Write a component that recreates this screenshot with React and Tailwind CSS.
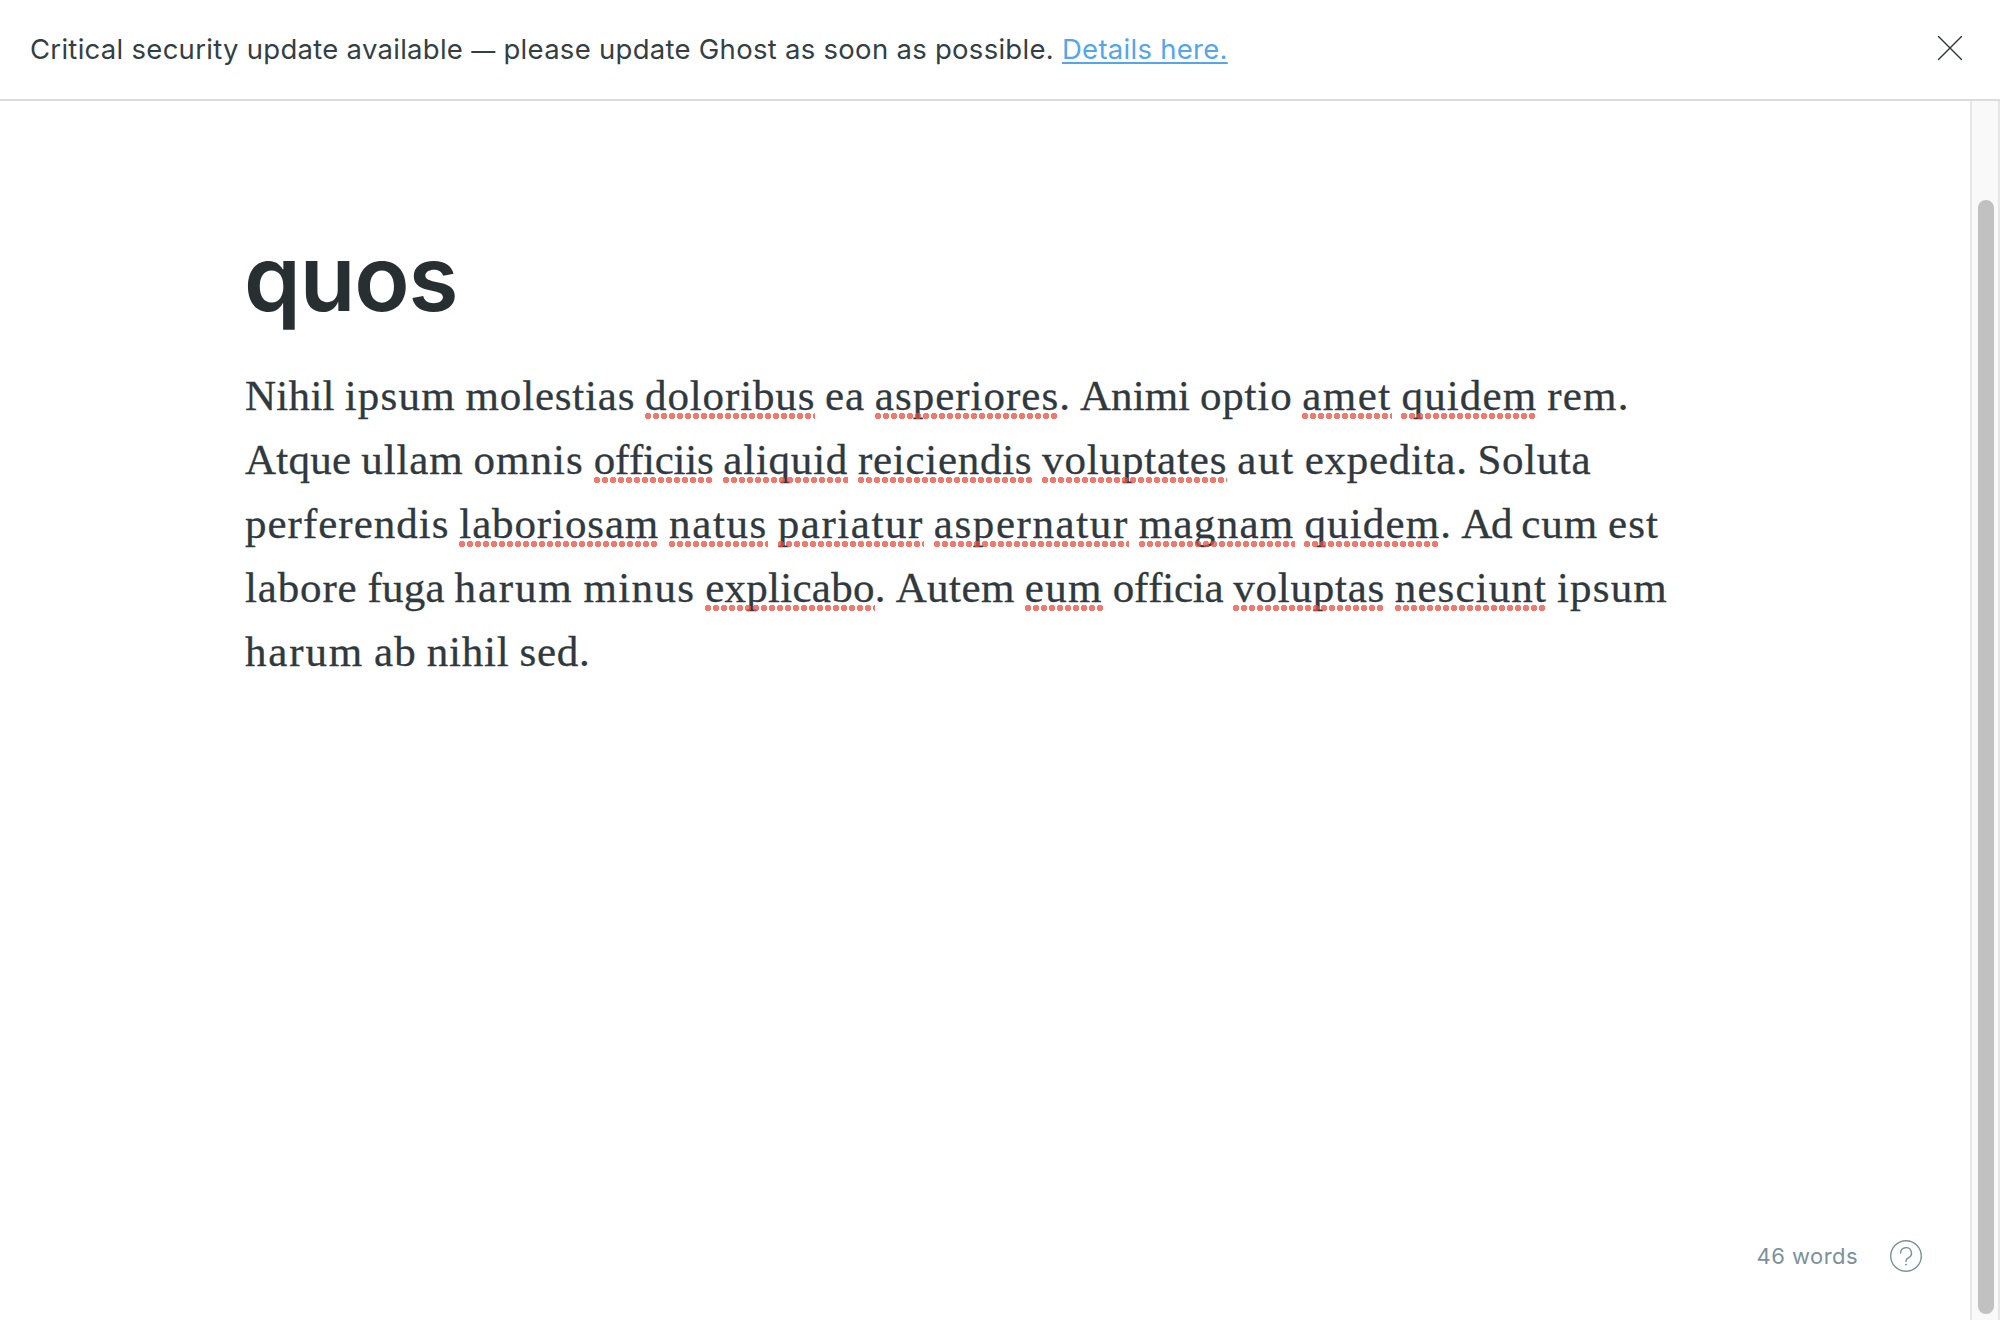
import React from "react";

const LINES = [
  "Nihil ipsum molestias *doloribus* ea *asperiores*. Animi optio *amet* *quidem* rem.",
  "Atque ullam omnis *officiis* *aliquid* *reiciendis* *voluptates* aut expedita. Soluta",
  "perferendis *laboriosam* *natus* *pariatur* *aspernatur* *magnam* *quidem*. Ad cum est",
  "labore fuga harum minus *explicabo*. Autem *eum* officia *voluptas* *nesciunt* ipsum",
  "harum ab nihil sed.",
];

// Letter advances in em at a 40px body size.
const ADVANCE = {
  a: 0.504, b: 0.56, c: 0.454, d: 0.574, e: 0.484, f: 0.325, g: 0.509, h: 0.582,
  i: 0.293, l: 0.287, m: 0.88, n: 0.591, o: 0.539, p: 0.571, q: 0.56, r: 0.41,
  s: 0.432, t: 0.346, u: 0.576, v: 0.497, x: 0.504, A: 0.671, N: 0.767, S: 0.561,
  ".": 0.27, " ": 0.241,
};

const ctx = document.createElement("canvas").getContext("2d");

function tracking(text) {
  ctx.font = '43px "Liberation Serif"';
  ctx.fontKerning = "none";
  const target = [...text].reduce((sum, ch) => sum + ADVANCE[ch] * 40 + 0.195, 0);
  return (target - ctx.measureText(text).width) / text.length;
}

function Run({ text, marked }) {
  const style = { letterSpacing: `${tracking(text).toFixed(3)}px` };
  if (!marked) return <span style={style}>{text}</span>;
  return (
    <span
      style={style}
      className="relative after:absolute after:inset-x-0 after:bottom-0 after:h-[6px] after:bg-[radial-gradient(circle_at_3px_3px,rgba(238,75,60,0.75)_2.9px,transparent_3.5px)] after:bg-[length:8px_6px] after:content-['']"
    >
      {text}
    </span>
  );
}

function Line({ source }) {
  return (
    <span className="block h-16 whitespace-pre">
      {source
        .split("*")
        .flatMap((part, i) =>
          i % 2
            ? [<Run key={i} text={part} marked />]
            : part
                .split(/( )/)
                .filter(Boolean)
                .map((t, j) => <Run key={`${i}-${j}`} text={t} />)
        )}
    </span>
  );
}

function Banner() {
  return (
    <header className="flex h-[101px] shrink-0 items-center justify-between border-b-2 border-[#dadcdc] pr-[37px] pb-px pl-[30px]">
      <p className="text-[27.5px] leading-[34px] tracking-[0.28px] whitespace-nowrap text-[#343f44]">
        Critical security update available <span className="text-[24px] leading-none">—</span> please update Ghost as soon as possible.{" "}
        <a className="text-[#54a6ea] underline decoration-2 underline-offset-[3px] [text-decoration-skip-ink:none]">
          Details here.
        </a>
      </p>
      <button aria-label="Close" className="-mt-[2px]">
        <svg width="26" height="26" viewBox="0 0 26 26" fill="none" stroke="#2b3439" strokeWidth="1.4" strokeLinecap="round">
          <path d="M1.5 1.5l23 23M24.5 1.5l-23 23" />
        </svg>
      </button>
    </header>
  );
}

function Scrollbar() {
  return (
    <div className="flex w-[30px] shrink-0 flex-col border-x-2 border-[#e6e6e6] bg-[#f9f9f9] pt-[99px] pr-1 pb-[6px] pl-[6px]">
      <div className="flex-1 rounded-full bg-[#c1c1c1]" />
    </div>
  );
}

export default function App() {
  return (
    <div className="flex h-[1320px] w-[2000px] flex-col overflow-hidden bg-white font-['Inter',sans-serif]">
      <Banner />
      <div className="flex min-h-0 flex-1">
        <main className="flex flex-1 flex-col pl-[245px]">
          <h1 className="mt-[122px] -ml-px text-[91px] leading-[110px] font-semibold tracking-[-1.1px] text-[#282f33]">quos</h1>
          <p className="mt-[31px] font-['Liberation_Serif',serif] text-[43px] leading-[64px] text-[#30393d] [font-kerning:none] [-webkit-text-stroke:0.3px]">
            {LINES.map((l) => (
              <Line key={l} source={l} />
            ))}
          </p>
          <footer className="mt-auto mr-[48px] mb-[48px] flex items-center justify-end gap-[32px] text-[#7b919c]">
            <span className="text-[22px] leading-8 tracking-[0.45px]">46 words</span>
            <svg width="32" height="32" viewBox="0 0 32 32" fill="none" stroke="currentColor" strokeWidth="1.4" strokeLinecap="round" strokeLinejoin="round">
              <circle cx="16" cy="16" r="15.3" />
              <path d="M10.6 13.1a5.4 5.4 0 1 1 7.6 4.9c-1.4.7-2.2 1.5-2.2 2.8v.7" />
              <circle cx="16" cy="24.6" r="0.6" fill="currentColor" strokeWidth="0.8" />
            </svg>
          </footer>
        </main>
        <Scrollbar />
      </div>
    </div>
  );
}
